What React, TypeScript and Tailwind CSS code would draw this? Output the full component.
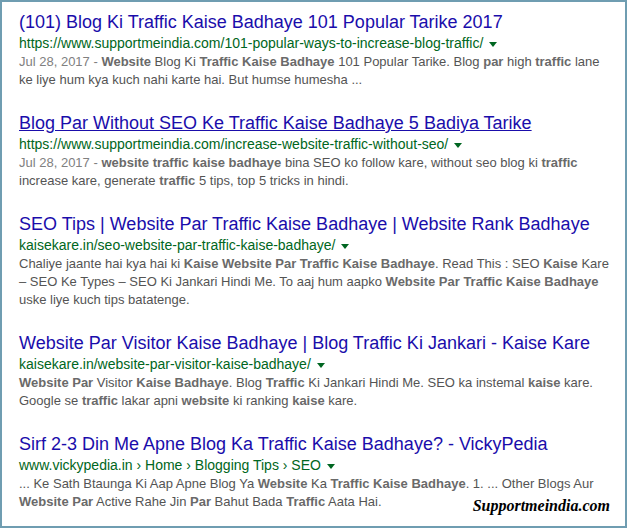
import React from 'react';

type Part = string | { b: string };

type Result = {
    title: string;
    url: string;
    date?: string;
    lines: Part[][];
    hover?: boolean;
};

const results: Result[] = [
    {
        title: '(101) Blog Ki Traffic Kaise Badhaye 101 Popular Tarike 2017',
        url: 'https://www.supportmeindia.com/101-popular-ways-to-increase-blog-traffic/',
        date: 'Jul 28, 2017 - ',
        lines: [
            [{ b: 'Website' }, ' Blog Ki ', { b: 'Traffic Kaise Badhaye' }, ' 101 Popular Tarike. Blog ', { b: 'par' }, ' high ', { b: 'traffic' }, ' lane'],
            ['ke liye hum kya kuch nahi karte hai. But humse humesha ...'],
        ],
    },
    {
        title: 'Blog Par Without SEO Ke Traffic Kaise Badhaye 5 Badiya Tarike',
        url: 'https://www.supportmeindia.com/increase-website-traffic-without-seo/',
        date: 'Jul 28, 2017 - ',
        hover: true,
        lines: [
            [{ b: 'website traffic kaise badhaye' }, ' bina SEO ko follow kare, without seo blog ki ', { b: 'traffic' }],
            ['increase kare, generate ', { b: 'traffic' }, ' 5 tips, top 5 tricks in hindi.'],
        ],
    },
    {
        title: 'SEO Tips | Website Par Traffic Kaise Badhaye | Website Rank Badhaye',
        url: 'kaisekare.in/seo-website-par-traffic-kaise-badhaye/',
        lines: [
            ['Chaliye jaante hai kya hai ki ', { b: 'Kaise Website Par Traffic Kaise Badhaye' }, '. Read This : SEO ', { b: 'Kaise' }, ' Kare'],
            ['\u2013 SEO Ke Types \u2013 SEO Ki Jankari Hindi Me. To aaj hum aapko ', { b: 'Website Par Traffic Kaise Badhaye' }],
            ['uske liye kuch tips batatenge.'],
        ],
    },
    {
        title: 'Website Par Visitor Kaise Badhaye | Blog Traffic Ki Jankari - Kaise Kare',
        url: 'kaisekare.in/website-par-visitor-kaise-badhaye/',
        lines: [
            [{ b: 'Website Par' }, ' Visitor ', { b: 'Kaise Badhaye' }, '. Blog ', { b: 'Traffic' }, ' Ki Jankari Hindi Me. SEO ka instemal ', { b: 'kaise' }, ' kare.'],
            ['Google se ', { b: 'traffic' }, ' lakar apni ', { b: 'website' }, ' ki ranking ', { b: 'kaise' }, ' kare.'],
        ],
    },
    {
        title: 'Sirf 2-3 Din Me Apne Blog Ka Traffic Kaise Badhaye? - VickyPedia',
        url: 'www.vickypedia.in \u203a Home \u203a Blogging Tips \u203a SEO',
        lines: [
            ['... Ke Sath Btaunga Ki Aap Apne Blog Ya ', { b: 'Website' }, ' Ka ', { b: 'Traffic Kaise Badhaye' }, '. 1. ... Other Blogs Aur'],
            [{ b: 'Website Par' }, ' Active Rahe Jin ', { b: 'Par' }, ' Bahut Bada ', { b: 'Traffic' }, ' Aata Hai.'],
        ],
    },
];

const Arrow = () => (
    <span className="inline-block ml-[6px] align-middle w-0 h-0 border-t-[5px] border-t-[#006621] border-x-[4px] border-x-transparent" />
);

const SearchResult = ({ r }: { r: Result }) => (
    <div>
        <div className={`text-[18px] leading-[22px] text-[#1a0dab] whitespace-nowrap ${r.hover ? 'underline' : ''}`}>
            {r.title}
        </div>
        <div className="text-[14px] leading-[20px] text-[#006621] whitespace-nowrap">
            {r.url}
            <Arrow />
        </div>
        <div className="text-[13px] leading-[18px] text-[#545454]">
            {r.lines.map((line, i) => (
                <div key={i} className="whitespace-nowrap">
                    {i === 0 && r.date && <span className="text-[#808080]">{r.date}</span>}
                    {line.map((p, j) =>
                        typeof p === 'string' ? <span key={j}>{p}</span> : <b key={j} className="font-bold text-[#6a6a6a]">{p.b}</b>
                    )}
                </div>
            ))}
        </div>
    </div>
);

export default function App() {
    return (
        <div className="relative w-[627px] h-[528px] bg-white border-2 border-[#6f9db1] overflow-hidden font-['Liberation_Sans',Arial,sans-serif]">
            <div className="flex flex-col gap-[23px] pt-[9px] pl-[17px]">
                {results.map((r, i) => (
                    <SearchResult key={i} r={r} />
                ))}
            </div>
            <div className="absolute right-[15px] bottom-[8px] font-['Liberation_Serif',serif] italic font-bold text-[16px] text-black">
                Supportmeindia.com
            </div>
        </div>
    );
}
